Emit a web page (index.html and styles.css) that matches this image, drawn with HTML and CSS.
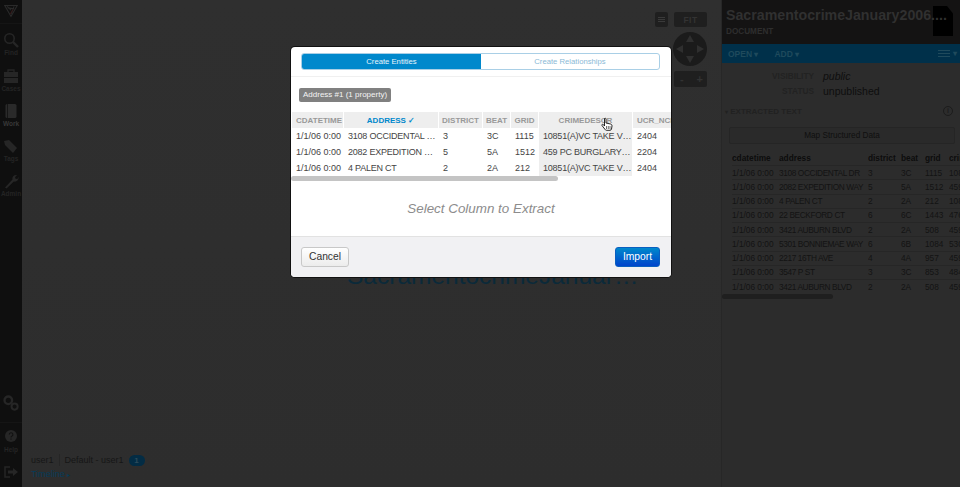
FILE: index.html
```html
<!DOCTYPE html>
<html lang="en">
<head>
<meta charset="utf-8">
<title>Import</title>
<link rel="stylesheet" href="styles.css">
</head>
<body>
<div class="app">
  <nav class="side">
    <div class="side-top">
      <svg class="logo" width="20" height="18" viewBox="0 0 20 18"><path d="M2 2h16L10 16z M6 5l8 1M14 3l-4 10M5 3l5 5" fill="none" stroke="#2a2a2a" stroke-width="1.4"/><path d="M9 13l2-4 2-2" fill="none" stroke="#3a1414"/></svg>
    </div>
    <a class="nav-item"><svg width="16" height="16" viewBox="0 0 16 16"><circle cx="6.5" cy="6.5" r="4.7" fill="none" stroke="#262626" stroke-width="1.6"/><path d="M10 10l5 5" stroke="#262626" stroke-width="2.4"/></svg><span>Find</span></a>
    <a class="nav-item"><svg width="16" height="16" viewBox="0 0 16 16"><path d="M5 4V2h6v2" fill="none" stroke="#262626" stroke-width="1.3"/><path d="M1 4h14v5H1zM1 10h14v5H1z" fill="#262626"/></svg><span>Cases</span></a>
    <a class="nav-item nav-active"><svg width="16" height="16" viewBox="0 0 16 16"><rect x="2.5" y="1" width="11" height="14" rx="1.5" fill="#2a2a2a"/><path d="M4.5 1v14" stroke="#161616"/></svg><span>Work</span></a>
    <a class="nav-item"><svg width="16" height="16" viewBox="0 0 16 16"><path d="M1 3l5-1 8 8-4 5-8-8z" fill="#262626"/></svg><span>Tags</span></a>
    <a class="nav-item"><svg width="16" height="16" viewBox="0 0 16 16"><path d="M2 14.5L9.5 6.5c-.6-2.5 1.4-5 4.5-4.5L12 4.2l.6 1.6 1.8.3L15.5 4c.6 3-2 5.200-4.700 4.500L3.500 15.500z" fill="#262626"/></svg><span>Admin</span></a>
    <div class="side-fill"></div>
    <a class="nav-item nav-gear"><svg width="18" height="18" viewBox="0 0 20 20"><circle cx="7" cy="7" r="4.200" fill="none" stroke="#262626" stroke-width="2.600"/><circle cx="14" cy="14" r="3.400" fill="none" stroke="#262626" stroke-width="2.200"/></svg></a>
    <a class="nav-item nav-help"><svg width="12" height="12" viewBox="0 0 12 12"><circle cx="6" cy="6" r="6" fill="#262626"/><path d="M4.300 4.600a1.800 1.800 0 1 1 2.400 1.700c-.5.200-.7.500-.7 1.200M6 8.500v1.200" fill="none" stroke="#111" stroke-width="1.100"/></svg><span>Help</span></a>
    <a class="nav-item nav-out"><svg width="14" height="12" viewBox="0 0 14 12"><path d="M6 1H1v10h5" fill="none" stroke="#262626" stroke-width="1.500"/><path d="M4 4.500h5V2l5 4-5 4V7.500H4z" fill="#262626"/></svg></a>
  </nav>

  <main class="canvas">
    <div class="controls">
      <div class="ctl-top">
        <span class="ctl menu-btn"><i></i><i></i><i></i></span>
        <span class="ctl fit">FIT</span>
      </div>
      <svg class="pan" width="34" height="34" viewBox="0 0 34 34"><circle cx="17" cy="17" r="17" fill="#1b1b1b"/><path d="M17 3l4 7h-8zM17 31l-4-7h8zM3 17l7-4v8zM31 17l-7 4v-8z" fill="#2f2f2f"/></svg>
      <div class="ctl zoom"><span>-</span><span>+</span></div>
    </div>
    <div class="bg-title">SacramentocrimeJanuar…</div>
    <div class="status">
      <div class="status-line">
        <span>user1</span><span class="status-sep"></span><span>Default - user1</span><b class="badge">1</b>
      </div>
      <div class="timeline">Timeline <small>▸</small></div>
    </div>
  </main>

  <aside class="panel">
    <header class="panel-head">
      <div class="doc-icon"></div>
      <div class="panel-title">SacramentocrimeJanuary2006....</div>
      <div class="panel-sub">DOCUMENT</div>
    </header>
    <div class="panel-bar">
      <span>OPEN <small>▾</small></span><span>ADD <small>▾</small></span>
      <span class="bar-menu"><span class="bar-lines"><i></i><i></i><i></i></span><small>▾</small></span>
    </div>
    <dl class="meta">
      <div class="meta-row"><dt>VISIBILITY</dt><dd class="em">public</dd></div>
      <div class="meta-row"><dt>STATUS</dt><dd>unpublished</dd></div>
    </dl>
    <div class="section-head">
      <span><small>▾</small> EXTRACTED TEXT</span>
      <span class="info">i</span>
    </div>
    <div class="map-btn">Map Structured Data</div>
    <div class="data-wrap">
      <table class="data">
        <thead><tr><th>cdatetime</th><th>address</th><th>district</th><th>beat</th><th>grid</th><th>crimedescr</th></tr></thead>
        <tbody>
          <tr><td>1/1/06 0:00</td><td>3108 OCCIDENTAL DR</td><td>3</td><td>3C</td><td>1115</td><td>10851</td></tr>
          <tr><td>1/1/06 0:00</td><td>2082 EXPEDITION WAY</td><td>5</td><td>5A</td><td>1512</td><td>459 PC</td></tr>
          <tr><td>1/1/06 0:00</td><td>4 PALEN CT</td><td>2</td><td>2A</td><td>212</td><td>10851</td></tr>
          <tr><td>1/1/06 0:00</td><td>22 BECKFORD CT</td><td>6</td><td>6C</td><td>1443</td><td>476</td></tr>
          <tr><td>1/1/06 0:00</td><td>3421 AUBURN BLVD</td><td>2</td><td>2A</td><td>508</td><td>459</td></tr>
          <tr><td>1/1/06 0:00</td><td>5301 BONNIEMAE WAY</td><td>6</td><td>6B</td><td>1084</td><td>530</td></tr>
          <tr><td>1/1/06 0:00</td><td>2217 16TH AVE</td><td>4</td><td>4A</td><td>957</td><td>459</td></tr>
          <tr><td>1/1/06 0:00</td><td>3547 P ST</td><td>3</td><td>3C</td><td>853</td><td>484</td></tr>
          <tr><td>1/1/06 0:00</td><td>3421 AUBURN BLVD</td><td>2</td><td>2A</td><td>508</td><td>459</td></tr>
        </tbody>
      </table>
    </div>
    <div class="data-scroll"></div>
  </aside>
</div>

<section class="modal">
  <div class="tabs-wrap">
    <div class="tabs">
      <div class="tab tab-on">Create Entities</div>
      <div class="tab">Create Relationships</div>
    </div>
  </div>
  <div class="modal-body">
    <span class="pill">Address #1 (1 property)</span>
    <div class="grid">
      <div class="cell head">CDATETIME</div><div class="cell head sel">ADDRESS ✓</div><div class="cell head c">DISTRICT</div><div class="cell head c">BEAT</div><div class="cell head c">GRID</div><div class="cell head c hov">CRIMEDESCR</div><div class="cell head">UCR_NCIC</div>
      <div class="cell">1/1/06 0:00</div><div class="cell cap">3108 OCCIDENTAL …</div><div class="cell">3</div><div class="cell">3C</div><div class="cell">1115</div><div class="cell cap shade">10851(A)VC TAKE V…</div><div class="cell">2404</div>
      <div class="cell">1/1/06 0:00</div><div class="cell cap">2082 EXPEDITION …</div><div class="cell">5</div><div class="cell">5A</div><div class="cell">1512</div><div class="cell cap shade">459 PC BURGLARY…</div><div class="cell">2204</div>
      <div class="cell">1/1/06 0:00</div><div class="cell cap">4 PALEN CT</div><div class="cell">2</div><div class="cell">2A</div><div class="cell">212</div><div class="cell cap shade">10851(A)VC TAKE V…</div><div class="cell">2404</div>
    </div>
    <div class="hscroll"></div>
    <p class="hint">Select Column to Extract</p>
  </div>
  <footer class="modal-foot">
    <button class="btn">Cancel</button>
    <button class="btn btn-primary">Import</button>
  </footer>
  <svg class="cursor" width="12" height="14" viewBox="0 0 12 14"><path d="M3.500 1.500c.8-.8 1.500 0 1.500.8V6l4.500 1c1 .3 1.500.8 1.500 2l-.5 3c-.2.800-.7 1.300-1.500 1.300H5.500c-.7 0-1.100-.3-1.500-.9L1 8.500c-.5-1 .7-1.700 1.500-.8L3.500 9z" fill="#fff" stroke="#111" stroke-width=".9"/><path d="M5.500 9v3M7.300 9v3M9 9v3" stroke="#111" stroke-width=".6"/></svg>
</section>
</body>
</html>
```
FILE: styles.css
```css
* { box-sizing: border-box; }
html, body { margin: 0; height: 100%; overflow: hidden; }
body { font-family: "Liberation Sans", Arial, sans-serif; background: #2e2e2e; color: #111; }

.app { display: flex; width: 960px; height: 487px; }

/* left rail */
.side { width: 22px; background: #0f0f0f; display: flex; flex-direction: column; align-items: center; flex: none; }
.side-top { height: 24px; display: flex; align-items: flex-start; justify-content: center; width: 100%; padding-top: 4px; border-bottom: 1px solid #151515; }
.logo { width: 16px; height: 14px; }
.nav-item { height: 35.300px; width: 100%; display: flex; flex-direction: column; align-items: center; justify-content: flex-end; padding-bottom: 3px; gap: 1px; }
.nav-item span { font-size: 6.500px; font-weight: 700; color: #242424; line-height: 7px; }
.nav-active span { color: #383838; }
.nav-item svg { flex: none; }
.side-fill { flex: 1; }
.nav-gear { height: 31px; justify-content: flex-start; padding: 2px 0 0; border-bottom: 1px solid #151515; margin-bottom: 4px; }
.nav-help { height: 33px; justify-content: flex-start; padding: 3px 0 0; gap: 4px; }
.nav-out { height: 27px; justify-content: flex-start; padding: 6px 0 0; }

/* canvas */
.canvas { flex: 1; position: relative; min-width: 0; background: linear-gradient(#2f2f2f, #2d2d2d); }
.controls { position: absolute; top: 12px; right: 14px; width: 52px; display: flex; flex-direction: column; align-items: flex-end; }
.ctl-top { display: flex; gap: 6px; }
.ctl { background: #1f1f1f; border-radius: 2px; color: #333; font-weight: 700; height: 15px; display: flex; align-items: center; justify-content: center; }
.menu-btn { width: 13px; flex-direction: column; gap: 1px; }
.menu-btn i { display: block; width: 7px; height: 1px; background: #3a3a3a; }
.fit { width: 33px; font-size: 8.500px; letter-spacing: .5px; }
.pan { margin: 5px 0 0; }
.zoom { width: 33px; height: 16px; margin-top: 5px; justify-content: space-between; padding: 0 4px 0 6px; font-size: 11px; }
.bg-title { position: absolute; left: 325px; top: 262px; width: 300px; font-size: 24.500px; line-height: 27px; color: #0b2a3a; white-space: nowrap; }
.status { position: absolute; left: 9px; bottom: 5px; font-size: 9px; line-height: 14px; color: #161616; }
.status-line { display: flex; align-items: center; gap: 4px; }
.status-sep { width: 1px; height: 12px; background: #262626; margin: 0 1px; }
.badge { margin-left: 1px; background: #032c44; color: #2c4a5a; border-radius: 8px; width: 16px; height: 11px; line-height: 11px; font-size: 8px; text-align: center; }
.timeline { color: #053b58; }
.timeline small { font-size: 6px; }

/* right panel */
.panel { width: 239px; flex: none; background: #2c2c2c; display: flex; flex-direction: column; overflow: hidden; border-left: 1px solid #272727; }
.panel-head { position: relative; height: 44px; background: #141313; padding: 5px 0 0 4px; color: #2e2e2e; }
.panel-title { position: relative; font-size: 14.200px; font-weight: 700; line-height: 20px; white-space: nowrap; color: #303030; }
.panel-sub { font-size: 8.200px; font-weight: 700; line-height: 10px; margin-top: 2px; }
.doc-icon { position: absolute; left: 211px; top: 6px; width: 20px; height: 30px; background: #000; clip-path: polygon(0 0, 70% 0, 100% 25%, 100% 100%, 0 100%); }
.panel-bar { height: 19px; background: #00304a; color: #1f4a5c; font-size: 8.500px; font-weight: 700; display: flex; align-items: center; gap: 16px; padding: 0 3px 0 6px; }
.panel-bar small { font-size: 8px; }
.bar-menu { margin-left: auto; display: flex; gap: 3px; align-items: center; }
.bar-lines { display: flex; flex-direction: column; gap: 1.500px; }
.bar-lines i { display: block; width: 12px; height: 1.500px; background: #1f4a5c; }
.meta { margin: 5px 0 0; }
.meta-row { display: flex; height: 15px; align-items: center; gap: 9px; }
.meta dt { width: 92px; text-align: right; font-size: 8.300px; font-weight: 700; color: #222; }
.meta dd { margin: 0; font-size: 10.500px; color: #0e0e0e; }
.meta .em { font-style: italic; }
.section-head { display: flex; justify-content: space-between; align-items: center; height: 14px; margin-top: 6px; padding: 0 7px 0 3px; font-size: 8px; font-weight: 700; color: #212121; }
.section-head small { font-size: 6px; }
.info { width: 10px; height: 10px; border: 1px solid #1c1c1c; border-radius: 50%; font-size: 7px; line-height: 8px; text-align: center; color: #1c1c1c; }
.map-btn { margin: 9px 5px 0 7px; height: 17px; background: #2a2a2a; border: 1px solid #252525; border-radius: 2px; font-size: 8.200px; line-height: 15px; text-align: center; color: #0f0f0f; }
.data-wrap { overflow: hidden; margin-top: 7.500px; padding-left: 10px; height: 142px; flex: none; }
.data { border-collapse: collapse; table-layout: fixed; width: 228px; font-size: 8.300px; color: #131313; }
.data th { text-align: left; font-weight: 700; height: 14px; padding: 0; color: #0d0d0d; overflow: hidden; }
.data td { height: 14.250px; padding: 0; border-top: 1px solid #262626; white-space: nowrap; overflow: hidden; }
.data td:nth-child(2) { letter-spacing: -.38px; }
.data th:nth-child(1) { width: 47px; }
.data th:nth-child(2) { width: 89px; }
.data th:nth-child(3) { width: 33px; }
.data th:nth-child(4) { width: 24px; }
.data th:nth-child(5) { width: 24px; }
.data-scroll { flex: none; width: 111px; height: 5.500px; border-radius: 3px; background: #1f1f1f; }

/* modal */
.modal { position: absolute; left: 291px; top: 47px; width: 380px; height: 230px; background: #fff; border-radius: 4px; box-shadow: 0 0 0 1px #111; display: flex; flex-direction: column; overflow: hidden; }
.tabs-wrap { height: 30px; padding: 6px 11px 0 10px; border-bottom: 1px solid #f0f0f0; flex: none; }
.tabs { display: flex; height: 17px; border: 1px solid #a9cfe6; border-radius: 3px; overflow: hidden; }
.tab { flex: 1; font-size: 7.700px; line-height: 15px; text-align: center; color: #8ab9d6; }
.tab-on { background: #0088cc; color: #e8f4fb; flex: 0 0 179px; }
.modal-body { flex: 1; min-height: 0; position: relative; }
.pill { display: block; width: max-content; margin: 11px 0 0 8px; padding: 0 4px; height: 14px; line-height: 14px; background: #808080; color: #f4f4f4; font-size: 8px; border-radius: 2px; }
.grid { display: grid; grid-template-columns: 51px 94px 43px 27px 27px 93px 60px; grid-auto-rows: 16px; column-gap: 1px; margin: 10px 0 0 1px; width: 379px; overflow: hidden; }
.cell { font-size: 9px; line-height: 15px; padding: 1px 0 0 4px; color: #444; white-space: nowrap; overflow: hidden; }
.cap { letter-spacing: -.22px; }
.head { background: #eee; color: #999; font-weight: 700; font-size: 8px; }
.c { text-align: center; padding-left: 0; }
.sel { color: #0088cc; text-align: center; padding-left: 0; }
.hov, .shade { background: #eee; }
.hscroll { width: 267px; height: 5px; border-radius: 3px; background: #c4c4c4; }
.hint { margin: 20px 0 0; text-align: center; font-size: 13.400px; line-height: 16px; font-style: italic; color: #8c8c8c; }
.modal-foot { flex: none; height: 41px; background: #f1f1f3; border-top: 1px solid #e2e2e2; display: flex; align-items: center; justify-content: space-between; padding: 0 11px 0 10px; }
.btn { font: 10.300px/18px "Liberation Sans", Arial, sans-serif; height: 20px; width: 48px; padding: 0; background: linear-gradient(#fff, #ececec); border: 1px solid #c8c8c8; border-radius: 3px; color: #333; }
.btn-primary { width: 45px; background: linear-gradient(#0088cc, #0044cc); border-color: #0a5fc0; color: #fff; }
.cursor { position: absolute; left: 310px; top: 70px; }
```
